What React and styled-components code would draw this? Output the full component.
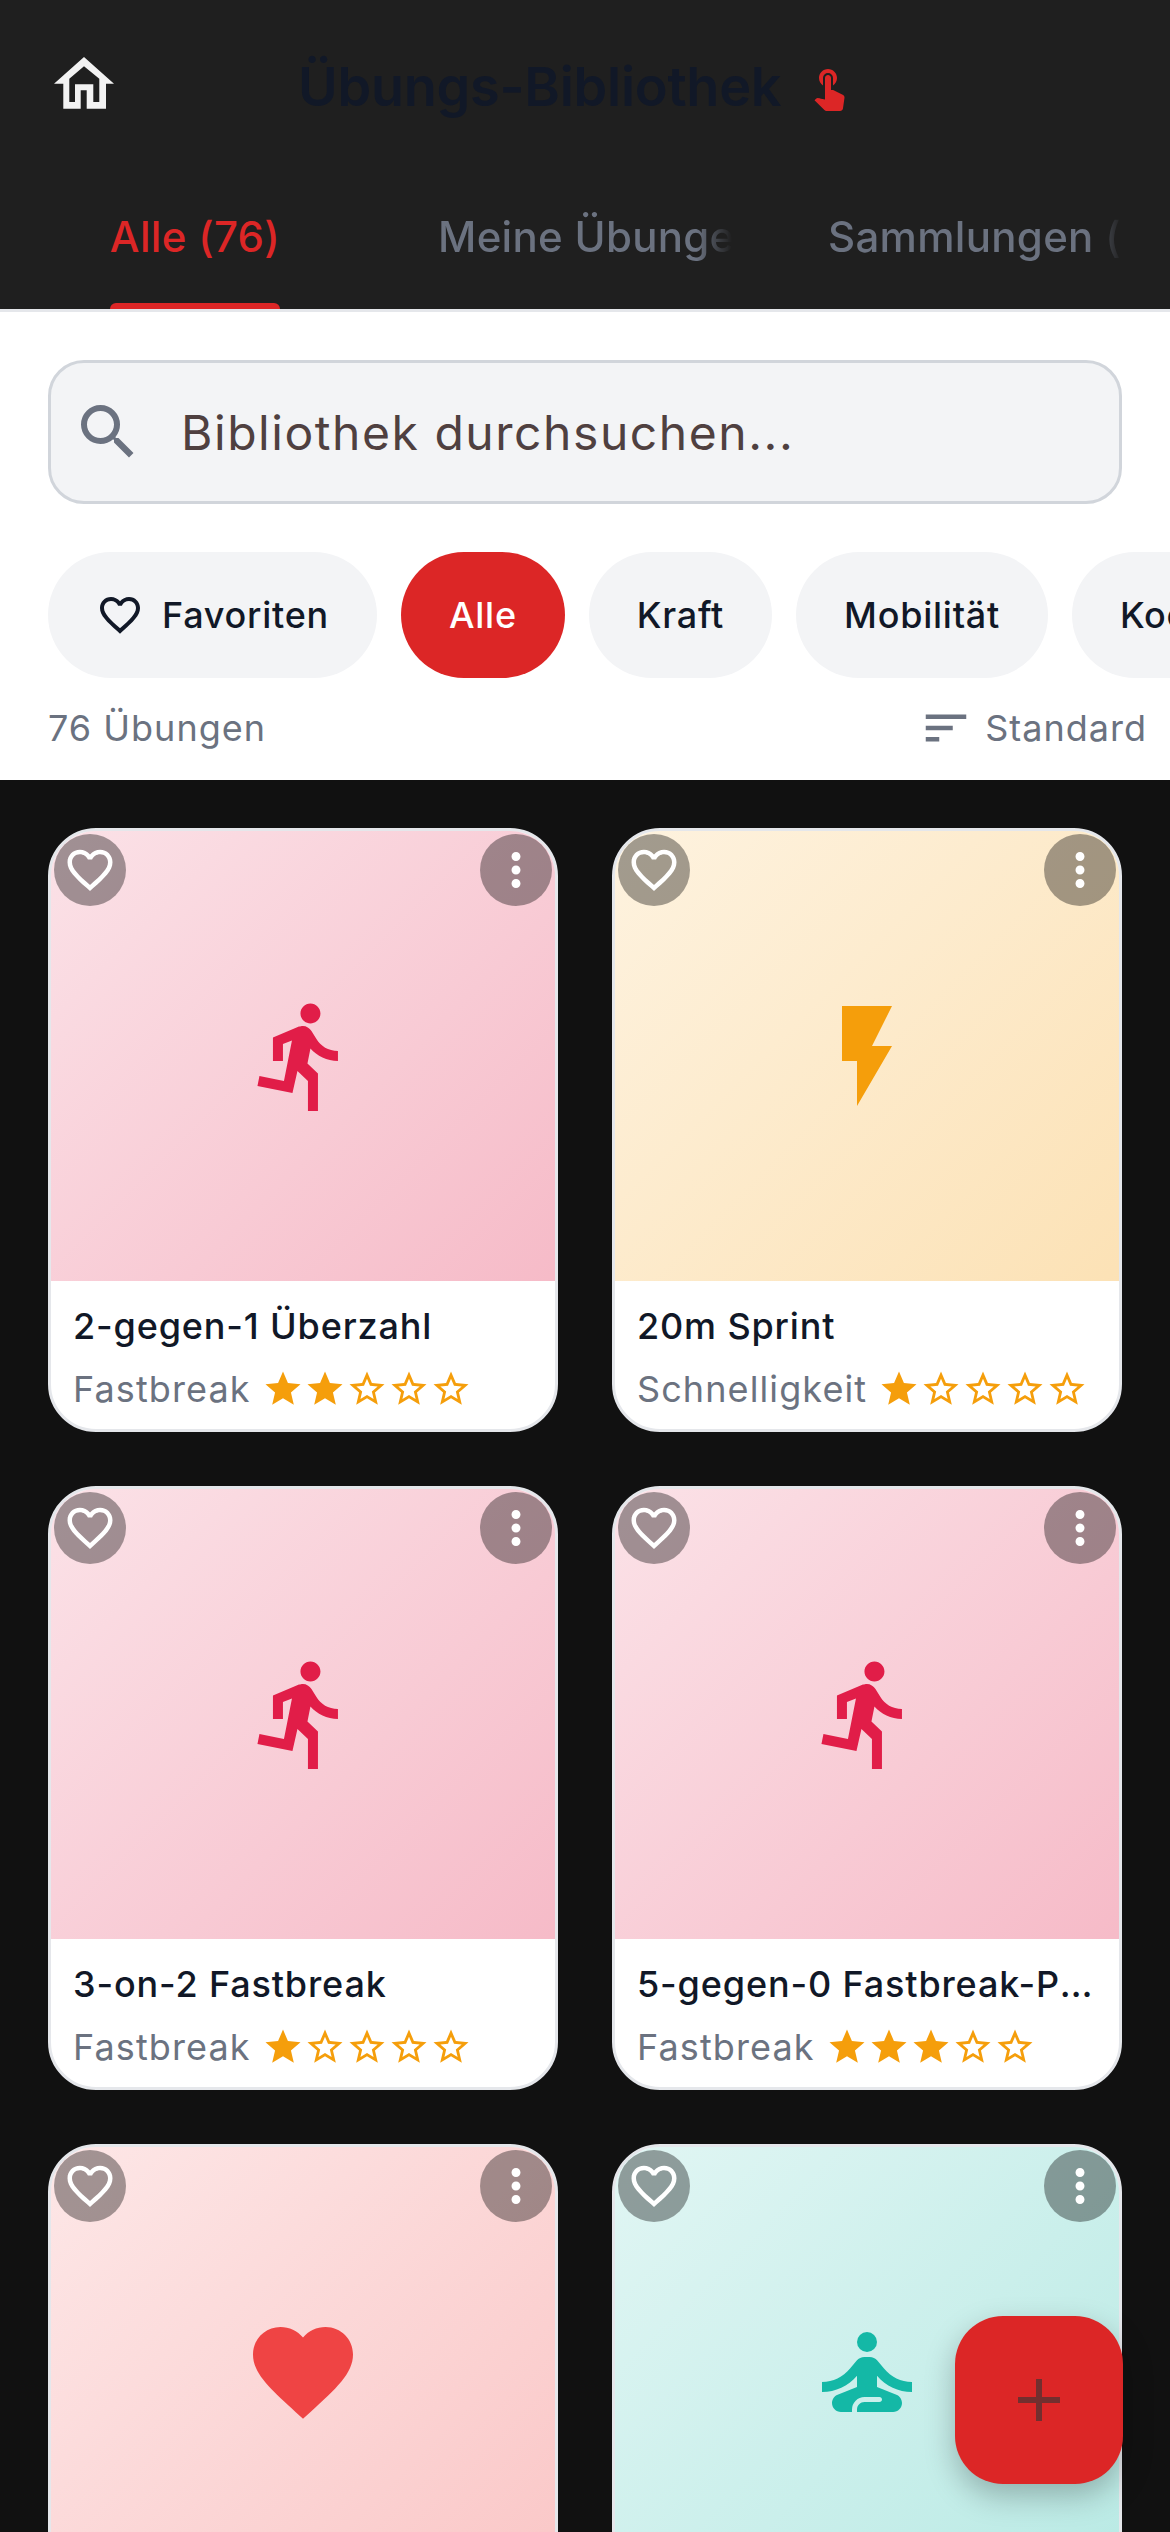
import React from 'react';
import styled, { createGlobalStyle } from 'styled-components';
import {
  MdTouchApp, MdSearch, MdFavoriteBorder, MdSort, MdMoreVert, MdStar, MdStarBorder,
  MdDirectionsRun, MdFlashOn, MdFavorite, MdSelfImprovement,
} from 'react-icons/md';

const Global = createGlobalStyle`
  html, body { margin: 0; padding: 0; background: #111111; }
  * { box-sizing: border-box; }
  body { font-family: Inter, "Noto Sans", sans-serif; }
`;

const Page = styled.div`
  position: relative;
  width: 1170px;
  height: 2532px;
  overflow: hidden;
  background: #111111;
`;

const Header = styled.header`
  background: #1f1f1f;
  border-bottom: 3px solid #e5e7eb;
  height: 312px;
`;

const Toolbar = styled.div`
  display: flex;
  align-items: center;
  height: 174px;
  padding-left: 54px;
`;

const HomeGlyph = styled.svg`
  width: 60px;
  height: 52px;
  margin-bottom: 8px;
  flex: none;
`;

const Title = styled.h1`
  margin: 0 24px 0 184px;
  font-size: 54px;
  font-weight: 600;
  line-height: 60px;
  letter-spacing: -0.25px;
  color: #111827;
  white-space: nowrap;
`;

const TouchIcon = styled(MdTouchApp)`
  color: #dc2626;
  flex: none;
`;

const Tabs = styled.nav`
  display: grid;
  grid-template-columns: repeat(3, 390px);
  height: 135px;
`;

const Tab = styled.div`
  position: relative;
  display: flex;
  justify-content: ${p => (p.$active ? 'center' : 'flex-start')};
  align-items: center;
  padding: 0 48px 6px;
  font-size: 42px;
  font-weight: 500;
  letter-spacing: 0.3px;
  color: ${p => (p.$active ? '#dc2626' : '#6b7280')};
`;

const TabLabel = styled.span`
  position: relative;
  display: block;
  white-space: nowrap;
  overflow: hidden;
  max-width: 294px;
  padding-bottom: 4px;
  ${p => p.$fade && `
    -webkit-mask-image: linear-gradient(to right, #000 88%, transparent 100%);
    mask-image: linear-gradient(to right, #000 88%, transparent 100%);
  `}
`;

const Indicator = styled.span`
  position: absolute;
  left: 110px;
  right: 110px;
  bottom: 0;
  height: 6px;
  border-radius: 9px 9px 0 0;
  background: #dc2626;
`;

const Panel = styled.section`
  background: #ffffff;
  height: 468px;
  padding: 48px 0 0 48px;
`;

const Search = styled.div`
  display: flex;
  align-items: center;
  width: 1074px;
  height: 144px;
  padding-left: 21px;
  background: #f3f4f6;
  border: 3px solid #d1d5db;
  border-radius: 36px;
`;

const SearchIcon = styled(MdSearch)`
  color: #6b7280;
  flex: none;
`;

const SearchText = styled.span`
  margin-left: 37px;
  font-size: 48px;
  letter-spacing: 1.55px;
  color: #4f4040;
  white-space: nowrap;
`;

const Chips = styled.div`
  display: flex;
  gap: 24px;
  margin-top: 48px;
  overflow: hidden;
`;

const Chip = styled.div`
  display: flex;
  align-items: center;
  gap: 18px;
  flex: none;
  height: 126px;
  padding: 0 48px;
  border-radius: 63px;
  font-size: 36px;
  font-weight: 450;
  letter-spacing: 0.75px;
  background: ${p => (p.$active ? '#dc2626' : '#f3f4f6')};
  color: ${p => (p.$active ? '#ffffff' : '#111827')};
`;

const CountRow = styled.div`
  display: flex;
  align-items: center;
  justify-content: space-between;
  height: 54px;
  margin-top: 23px;
  padding-right: 23px;
  font-size: 36px;
  letter-spacing: 1px;
  color: #6b7280;
`;

const SortGroup = styled.div`
  display: flex;
  align-items: center;
  gap: 12px;
`;

const Grid = styled.main`
  display: grid;
  grid-template-columns: repeat(2, 510px);
  gap: 54px;
  padding: 48px;
`;

const Card = styled.article`
  height: 604px;
  background: #ffffff;
  border: 3px solid #e5e7eb;
  border-radius: 48px;
  overflow: hidden;
`;

const Art = styled.div`
  position: relative;
  display: flex;
  align-items: center;
  justify-content: center;
  height: 450px;
  background: linear-gradient(135deg, rgba(${p => p.$rgb}, 0.13), rgba(${p => p.$rgb}, 0.3));
  color: rgb(${p => p.$rgb});
`;

const RoundButton = styled.button`
  position: absolute;
  top: 3px;
  ${p => (p.$side === 'left' ? 'left: 3px;' : 'right: 3px;')}
  display: flex;
  align-items: center;
  justify-content: center;
  width: 72px;
  height: 72px;
  padding: 0;
  border: 0;
  border-radius: 50%;
  background: rgba(0, 0, 0, 0.36);
  color: #ffffff;
`;

const Body = styled.div`
  padding: 21px 22px 0;
`;

const CardTitle = styled.div`
  font-size: 36px;
  font-weight: 450;
  line-height: 48px;
  letter-spacing: 0.85px;
  color: #111827;
  white-space: nowrap;
  overflow: hidden;
  text-overflow: ellipsis;
`;

const Meta = styled.div`
  display: flex;
  align-items: center;
  gap: 11px;
  margin-top: 15px;
  height: 48px;
  font-size: 36px;
  letter-spacing: 1.1px;
  color: #6b7280;
`;

const Stars = styled.div`
  display: flex;
  color: #f59e0b;
`;

const Fab = styled.button`
  position: absolute;
  left: 955px;
  top: 2316px;
  display: flex;
  align-items: center;
  justify-content: center;
  width: 168px;
  height: 168px;
  padding: 0;
  border: 0;
  border-radius: 48px;
  background: #dc2626;
  box-shadow: 0 12px 30px rgba(0, 0, 0, 0.25);
`;

const palette = {
  run: { rgb: '225, 29, 72', Icon: MdDirectionsRun },
  bolt: { rgb: '245, 158, 11', Icon: MdFlashOn },
  heart: { rgb: '239, 68, 68', Icon: MdFavorite },
  calm: { rgb: '20, 184, 166', Icon: MdSelfImprovement },
};

const drills = [
  { title: '2-gegen-1 Überzahl', tag: 'Fastbreak', stars: 2, kind: 'run' },
  { title: '20m Sprint', tag: 'Schnelligkeit', stars: 1, kind: 'bolt' },
  { title: '3-on-2 Fastbreak', tag: 'Fastbreak', stars: 1, kind: 'run' },
  { title: '5-gegen-0 Fastbreak-Pattern', tag: 'Fastbreak', stars: 3, kind: 'run' },
  { title: '', tag: '', stars: 0, kind: 'heart' },
  { title: '', tag: '', stars: 0, kind: 'calm' },
];

function DrillCard({ title, tag, stars, kind }) {
  const { rgb, Icon } = palette[kind];
  return (
    <Card>
      <Art $rgb={rgb}>
        <RoundButton $side="left"><MdFavoriteBorder size={54} /></RoundButton>
        <Icon size={120} />
        <RoundButton $side="right"><MdMoreVert size={54} /></RoundButton>
      </Art>
      <Body>
        <CardTitle>{title}</CardTitle>
        <Meta>
          {tag}
          <Stars>
            {[1, 2, 3, 4, 5].map(n => (n <= stars ? <MdStar key={n} size={42} /> : <MdStarBorder key={n} size={42} />))}
          </Stars>
        </Meta>
      </Body>
    </Card>
  );
}

export default function App() {
  return (
    <Page>
      <Global />
      <Header>
        <Toolbar>
          <HomeGlyph viewBox="0 0 60 52">
            <path
              fill="#f2f2f2"
              fillRule="evenodd"
              d="M30 0L60 26.7H52V51.7H9.3V26.7H0ZM30 9.3L15.3 21.7V45H21V27.3H39.3V45H45.3V21.7ZM26.7 33.3V51.7H32.7V33.3Z"
            />
          </HomeGlyph>
          <Title>Übungs-Bibliothek</Title>
          <TouchIcon size={48} />
        </Toolbar>
        <Tabs>
          <Tab $active><TabLabel>Alle (76)</TabLabel><Indicator /></Tab>
          <Tab><TabLabel $fade>Meine Übungen (12)</TabLabel></Tab>
          <Tab><TabLabel $fade>Sammlungen (4)</TabLabel></Tab>
        </Tabs>
      </Header>
      <Panel>
        <Search>
          <SearchIcon size={72} />
          <SearchText>Bibliothek durchsuchen...</SearchText>
        </Search>
        <Chips>
          <Chip><MdFavoriteBorder size={48} />Favoriten</Chip>
          <Chip $active>Alle</Chip>
          <Chip>Kraft</Chip>
          <Chip>Mobilität</Chip>
          <Chip>Koordination</Chip>
        </Chips>
        <CountRow>
          <span>76 Übungen</span>
          <SortGroup><MdSort size={54} />Standard</SortGroup>
        </CountRow>
      </Panel>
      <Grid>
        {drills.map((d, i) => <DrillCard key={i} {...d} />)}
      </Grid>
      <Fab aria-label="Hinzufügen">
        <svg width="42" height="42" viewBox="0 0 42 42">
          <path d="M21 0V42M0 21H42" stroke="#722f2f" strokeWidth="6" />
        </svg>
      </Fab>
    </Page>
  );
}
